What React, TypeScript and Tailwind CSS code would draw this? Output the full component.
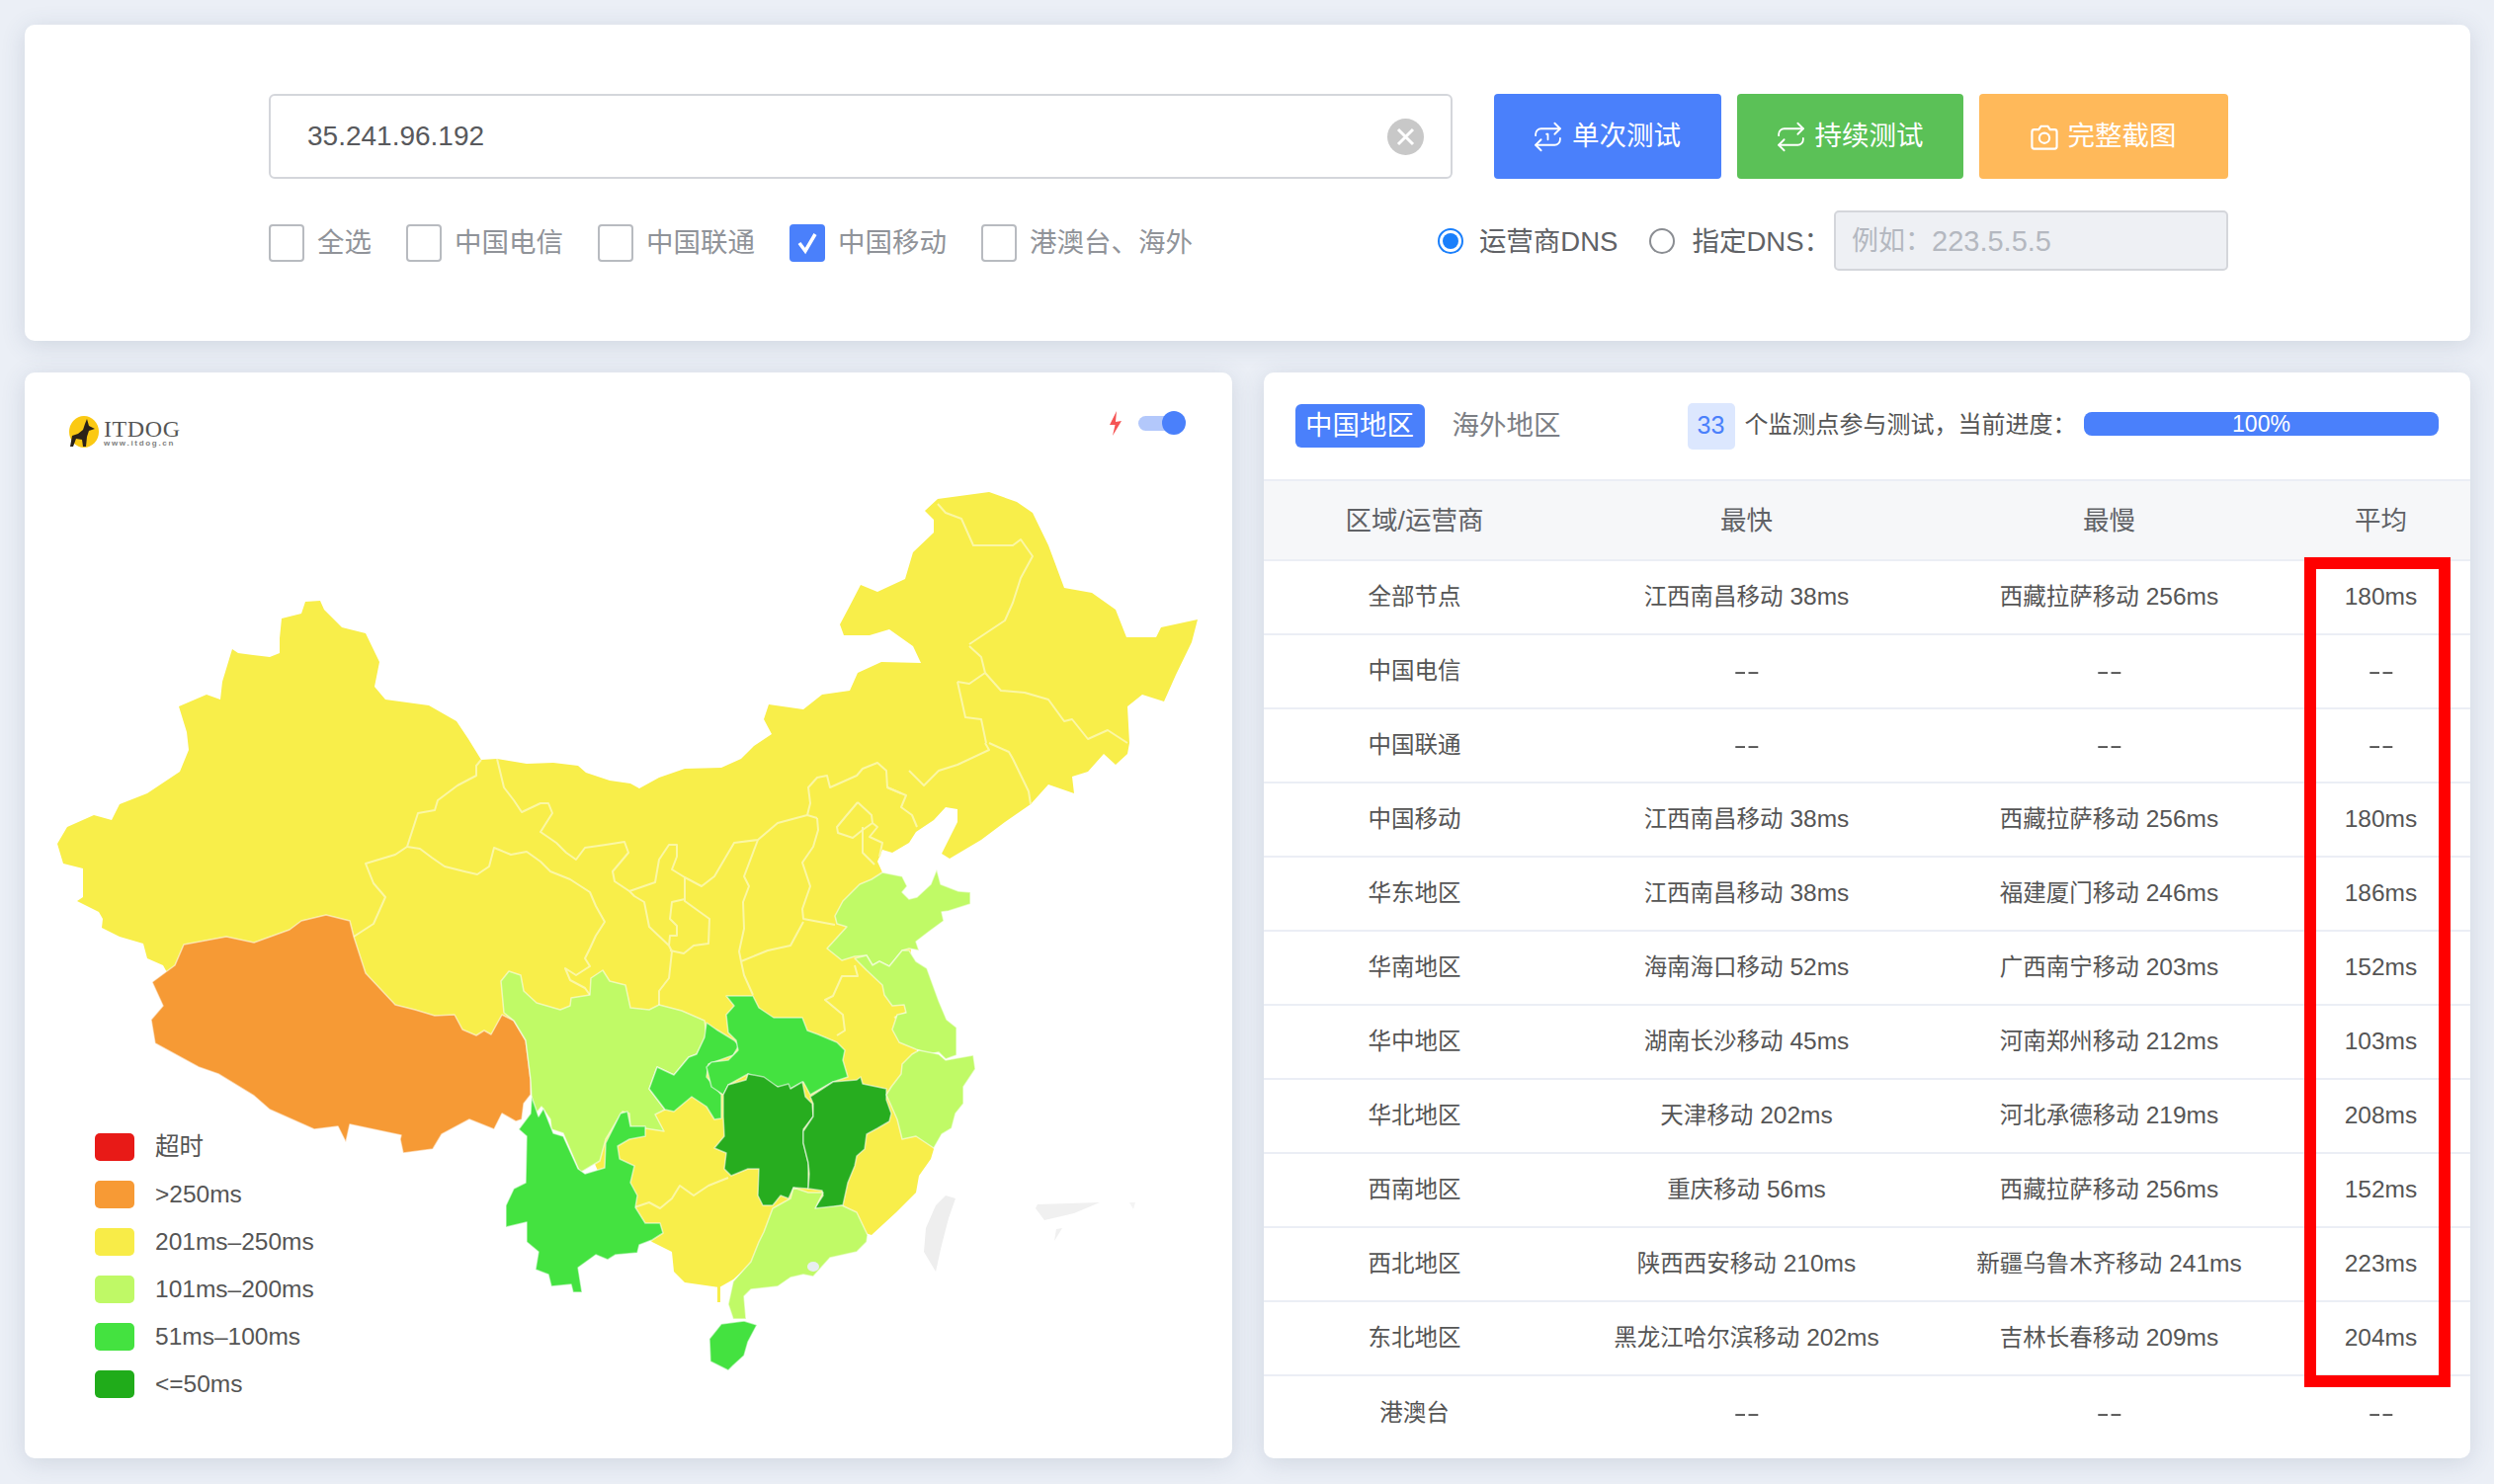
import React from "react";
import { Repeat, Repeat1 } from "lucide-react";

const FONT = "font-['Liberation_Sans','Noto_Sans_CJK_SC',sans-serif]";

const yellowMass =
  "309,609 324,608 328,617 346,635 370,641 384,670 379,695 390,708 434,714 462,730 474,748 487,769 503,768 533,773 560,772 585,775 593,782 617,790 638,793 647,798 667,787 693,778 730,777 750,768 763,755 781,743 773,728 778,713 813,718 832,703 860,699 868,681 892,670 932,671 924,654 900,637 880,643 854,643 850,632 858,617 871,592 888,599 916,586 924,559 945,539 945,526 936,517 949,505 1001,498 1029,508 1045,519 1061,552 1077,595 1105,600 1129,617 1140,645 1170,645 1175,635 1212,627 1206,650 1190,683 1178,710 1156,703 1141,715 1143,752 1141,763 1129,774 1117,763 1101,781 1085,786 1087,803 1061,794 1043,814 1017,832 993,850 961,869 953,864 969,832 969,819 957,817 945,830 927,842 920,853 903,863 893,860 888,872 893,883 920,940 925,1000 930,1100 945,1163 942,1173 930,1190 927,1207 907,1227 882,1250 850,1240 770,1270 742,1295 728,1303 693,1298 682,1287 680,1267 660,1257 620,1220 590,1150 560,1080 400,1080 200,1040 165,977 149,970 145,955 121,948 103,939 104,930 100,923 78,912 84,908 84,879 64,874 58,854 68,837 95,825 113,830 121,814 149,803 182,781 191,759 189,741 181,715 209,703 223,708 225,690 235,657 241,661 273,665 283,661 283,646 285,626 305,621";

const tibet =
  "186,956 229,948 257,954 293,941 305,932 330,926 354,932 358,948 370,985 400,1017 420,1022 440,1028 460,1027 468,1042 482,1048 490,1043 497,1047 508,1027 520,1033 532,1053 537,1093 537,1108 530,1117 528,1133 522,1135 508,1127 500,1143 475,1133 447,1148 438,1163 408,1167 405,1153 406,1149 354,1138 350,1156 342,1140 318,1143 273,1123 257,1109 221,1087 201,1080 157,1056 153,1032 165,1018 154,994 177,977";

const sichuan =
  "507,993 515,983 527,987 530,1003 543,1015 567,1022 577,1018 578,1010 597,1007 598,990 610,982 617,993 633,997 638,1020 657,1022 667,1017 690,1023 713,1033 715,1047 705,1067 697,1070 682,1088 665,1080 657,1102 673,1123 663,1128 672,1145 653,1142 638,1142 637,1127 630,1125 613,1153 607,1175 587,1187 570,1147 558,1143 557,1133 548,1120 540,1130 538,1113 537,1093 532,1053 520,1033 510,1025";

const chongqing =
  "715,1035 725,1042 743,1053 748,1058 742,1068 717,1077 715,1090 730,1108 730,1132 723,1133 715,1120 700,1110 682,1125 673,1123 657,1102 665,1080 682,1088 697,1070 705,1067 713,1050";

const hubei =
  "735,1008 762,1008 768,1020 783,1030 812,1030 817,1043 828,1047 847,1055 855,1063 853,1073 858,1090 843,1095 820,1108 813,1095 800,1102 787,1100 757,1087 737,1098 732,1108 720,1100 715,1080 720,1075 737,1073 747,1063 745,1053 737,1045 735,1027 743,1018";

const hunan =
  "732,1108 737,1098 755,1093 757,1087 773,1090 787,1100 798,1097 800,1102 812,1095 815,1110 822,1117 823,1130 813,1143 813,1157 818,1177 818,1203 803,1202 798,1213 790,1210 782,1220 772,1220 767,1210 768,1183 757,1183 740,1190 733,1183 735,1167 723,1162 733,1150 732,1130";

const jiangxi =
  "820,1110 843,1095 867,1093 871,1090 873,1097 897,1102 897,1113 902,1127 900,1135 888,1142 877,1148 875,1163 867,1170 865,1180 858,1197 853,1220 827,1225 825,1222 833,1210 832,1205 818,1203 819,1188 818,1177 813,1157 813,1145 823,1130 823,1117";

const yunnan =
  "538,1110 537,1127 525,1143 533,1150 532,1197 520,1203 512,1220 512,1242 533,1237 533,1257 545,1267 542,1285 555,1290 558,1302 578,1300 580,1308 589,1308 585,1283 603,1270 615,1275 623,1270 645,1268 647,1260 660,1255 671,1248 668,1238 653,1238 643,1222 645,1210 638,1197 642,1180 627,1173 625,1160 637,1153 653,1150 653,1140 638,1140 635,1125 628,1127 613,1157 612,1182 592,1188 585,1183 570,1150 560,1147 550,1122 545,1130";

const guangdong =
  "782,1223 800,1213 803,1202 818,1207 833,1207 825,1223 852,1220 867,1227 878,1250 877,1257 867,1267 840,1273 823,1292 813,1290 800,1293 787,1302 760,1305 753,1312 755,1335 742,1335 737,1320 742,1297 760,1277 768,1257 773,1247";

const hainan = "730,1340 753,1337 766,1341 757,1358 753,1372 742,1382 737,1387 719,1378 718,1355";

const shandong =
  "893,883 913,887 918,897 913,903 920,910 928,908 942,895 948,880 952,895 970,902 982,903 982,915 960,922 953,923 955,932 940,943 927,953 930,962 920,960 913,962 900,978 890,973 883,977 877,967 865,968 852,972 837,960 857,938 847,935 845,927 853,912 870,895 882,890";

const jiangsu =
  "920,962 927,973 938,980 950,1013 958,1032 968,1040 968,1068 957,1072 950,1065 940,1067 927,1062 910,1055 903,1042 908,1027 917,1025 915,1017 903,1018 895,1007 893,997 877,982 865,970 877,967 883,977 890,973 900,978 913,962";

const zhejiang =
  "930,1063 950,1067 957,1073 985,1068 987,1082 975,1100 975,1117 967,1127 963,1142 953,1148 945,1162 927,1150 913,1153 908,1133 897,1108 902,1100 912,1087 913,1077 923,1067";

const lines = [
  "487,769 482,775 482,785 463,795 443,810 440,820 423,823 412,857 400,865 370,874 378,894 390,908 378,935 358,948",
  "412,857 425,859 437,868 450,877 470,882 483,885 495,877 500,858 517,865 533,862 547,872 557,882 577,890 597,903 603,917 612,933 603,947 597,960 592,970 597,978 583,987 572,980 577,992 592,1000 597,1007",
  "503,768 510,797 520,810 528,822 547,813 555,813 559,823 547,842 563,853 573,863 583,870 592,858 613,855 632,852 636,863 620,882 622,892 637,902 663,893 667,870 677,855 685,855 685,867 680,880 693,888 710,897 723,887 743,853 767,850 787,833 817,825 827,828",
  "637,902 642,907 652,913 657,938 677,957 680,963 677,990 667,1003 667,1018",
  "693,888 693,912 718,930 717,955 702,957 692,965 678,962",
  "693,910 680,913 678,930 685,937 685,947 678,947 677,957",
  "767,850 753,887 758,897 752,913 753,940 748,963 750,973 753,987 762,1007",
  "750,973 777,962 800,957 813,933",
  "827,828 828,840 823,857 812,873 820,897 812,920 813,930 845,936",
  "817,825 820,813 818,797 827,787 837,785 840,797 867,785 873,778 888,772 897,780 898,797 917,805 912,817 923,825 928,837",
  "868,812 882,825 883,833 873,840 863,848 848,843 847,837 857,825 868,812",
  "873,837 873,863 885,875",
  "883,833 888,837 880,847 893,853 890,867",
  "920,780 935,795 950,780 969,774 1001,759 997,752",
  "898,797 912,803",
  "1001,752 1021,761 1025,768 1041,801 1043,814",
  "969,690 977,726 993,728 998,752",
  "997,681 1013,699 1037,701 1061,708 1077,730 1085,728 1101,748 1121,739 1141,752",
  "969,690 981,692 997,681 993,665 981,654",
  "949,510 957,519 973,525 985,552 1025,552 1033,546 1045,563 1033,585 1025,610 1017,628 981,652",
  "865,977 868,988 852,988 843,1008 835,1012 853,1027 855,1043 847,1048",
  "642,1222 657,1217 668,1223 680,1213 688,1200 702,1210 717,1200 737,1192",
  "950,1066 957,1044 968,1047",
  "917,1025 905,1030",
];

const legend = [
  { label: "超时", color: "bg-[#e81a17]" },
  { label: ">250ms", color: "bg-[#f79a35]" },
  { label: "201ms–250ms", color: "bg-[#f8ec48]" },
  { label: "101ms–200ms", color: "bg-[#bff966]" },
  { label: "51ms–100ms", color: "bg-[#44e240]" },
  { label: "<=50ms", color: "bg-[#20ac1a]" },
];

const rows = [
  ["全部节点", "江西南昌移动 38ms", "西藏拉萨移动 256ms", "180ms"],
  ["中国电信", "--", "--", "--"],
  ["中国联通", "--", "--", "--"],
  ["中国移动", "江西南昌移动 38ms", "西藏拉萨移动 256ms", "180ms"],
  ["华东地区", "江西南昌移动 38ms", "福建厦门移动 246ms", "186ms"],
  ["华南地区", "海南海口移动 52ms", "广西南宁移动 203ms", "152ms"],
  ["华中地区", "湖南长沙移动 45ms", "河南郑州移动 212ms", "103ms"],
  ["华北地区", "天津移动 202ms", "河北承德移动 219ms", "208ms"],
  ["西南地区", "重庆移动 56ms", "西藏拉萨移动 256ms", "152ms"],
  ["西北地区", "陕西西安移动 210ms", "新疆乌鲁木齐移动 241ms", "223ms"],
  ["东北地区", "黑龙江哈尔滨移动 202ms", "吉林长春移动 209ms", "204ms"],
  ["港澳台", "--", "--", "--"],
];

function Check({ label, checked }: { label: string; checked?: boolean }) {
  return (
    <label className="flex items-center gap-[13px] mr-[35px] mt-[4px] last:mr-0">
      <span
        className={
          checked
            ? "flex w-[36px] h-[38px] items-center justify-center rounded-[4px] bg-[#4a80fb]"
            : "block w-[36px] h-[38px] rounded-[4px] border-2 border-[#b8bbc0] bg-white"
        }
      >
        {checked && (
          <svg width="26" height="26" viewBox="0 0 26 26" fill="none">
            <path d="M5 13l6 8L21 4" stroke="#fff" strokeWidth="3.5" />
          </svg>
        )}
      </span>
      <span className="text-[27.5px] leading-none text-[#909399]">{label}</span>
    </label>
  );
}

function Cell({ v }: { v: string }) {
  if (v === "--") {
    return (
      <td className="text-center">
        <span className="inline-block scale-x-[1.7]">--</span>
      </td>
    );
  }
  const m = v.match(/^(.*?)\s?(\d+ms)$/);
  if (m) {
    return (
      <td className="text-center">
        {m[1]}
        {m[1] ? <span className="text-[24.5px]"> </span> : null}
        <span className="text-[24.5px]">{m[2]}</span>
      </td>
    );
  }
  return <td className="text-center">{v}</td>;
}

export default function App() {
  return (
    <div className={`${FONT} min-h-screen bg-[#ebeff6] pl-[25px] pr-[24px] pt-[25px] pb-[25px] flex flex-col gap-[32px] text-[#606266]`}>
      {/* top card */}
      <section className="h-[320px] rounded-[10px] bg-white shadow-[0_4px_24px_rgba(60,80,110,0.16)] pl-[247px] pt-[70px] flex flex-col gap-[32px]">
        <div className="flex items-stretch h-[86px]">
          <div className="w-[1198px] rounded-[6px] border-2 border-[#d4d6db] flex items-center justify-between pl-[37px] pr-[27px]">
            <span className="text-[28px] text-[#58595c]">35.241.96.192</span>
            <span className="w-[37px] h-[37px] rounded-full bg-[#c8c8c8] flex items-center justify-center">
              <svg width="21" height="21" viewBox="0 0 21 21" fill="none">
                <path d="M3 3l15 15M18 3L3 18" stroke="#fff" strokeWidth="3" />
              </svg>
            </span>
          </div>
          <button className="ml-[42px] w-[230px] pr-[3px] rounded-[4px] bg-[#4a80fb] text-white text-[27.5px] flex items-center justify-center gap-[8px]">
            <Repeat1 size={33} strokeWidth={1.3} />
            单次测试
          </button>
          <button className="ml-[16px] w-[229px] pr-[3px] rounded-[4px] bg-[#5bc157] text-white text-[27.5px] flex items-center justify-center gap-[8px]">
            <Repeat size={33} strokeWidth={1.3} />
            持续测试
          </button>
          <button className="ml-[16px] w-[252px] pr-[3px] rounded-[4px] bg-[#ffb95a] text-white text-[27.5px] flex items-center justify-center gap-[8px]">
            <svg width="32" height="32" viewBox="0 0 28 28" fill="none" stroke="currentColor" strokeWidth="1.9">
              <path d="M5 8h4l2-3h6l2 3h4a2 2 0 0 1 2 2v13a2 2 0 0 1-2 2H5a2 2 0 0 1-2-2V10a2 2 0 0 1 2-2z" />
              <circle cx="14" cy="15.5" r="4.5" />
            </svg>
            完整截图
          </button>
        </div>
        <div className="flex items-center w-[1983px] h-[61px]">
          <Check label="全选" />
          <Check label="中国电信" />
          <Check label="中国联通" />
          <Check label="中国移动" checked />
          <Check label="港澳台、海外" />
          <span className="ml-auto w-[26px] h-[26px] rounded-full border-2 border-[#1a7ffb] flex items-center justify-center">
            <span className="block w-[16px] h-[16px] rounded-full bg-[#1a7ffb]" />
          </span>
          <span className="ml-[16px] pt-[2px] text-[27.5px] leading-none">运营商DNS</span>
          <span className="ml-[32px] w-[26px] h-[26px] rounded-full border-2 border-[#8a8d92]" />
          <span className="ml-[17px] pt-[2px] text-[27.5px] leading-none">指定DNS：</span>
          <div className="ml-[3px] w-[399px] h-[61px] rounded-[5px] border-2 border-[#d4d6db] bg-[#eef0f4] flex items-center pl-[16px] pt-[2px] text-[27px] text-[#b4b8c0]">
            例如：<span className="text-[29px]">223.5.5.5</span>
          </div>
        </div>
      </section>

      {/* lower cards */}
      <div className="flex gap-[32px] h-[1099px]">
        <section className="relative w-[1222px] rounded-[10px] bg-white shadow-[0_4px_24px_rgba(60,80,110,0.16)] overflow-hidden">
          <svg className="block blur-[0.6px]" width="1222" height="1099" viewBox="25 377 1222 1099">
            <polygon points={yellowMass} fill="#f8ee4a" />
            <polygon points="726,1300 729,1300 729,1318 726,1318" fill="#f8ee4a" />
            <g stroke="#fbf7a5" strokeWidth="2" fill="none" strokeLinejoin="round">
              {lines.map((p, i) => (
                <polyline key={i} points={p} />
              ))}
            </g>
            <g stroke="#ffffff" strokeOpacity="0.55" strokeWidth="1.5" strokeLinejoin="round">
              <polygon points={tibet} fill="#f69a35" />
              <polygon points={sichuan} fill="#c0fa66" />
              <polygon points={yunnan} fill="#44e240" />
              <polygon points={chongqing} fill="#44e240" />
              <polygon points={hubei} fill="#44e240" />
              <polygon points={hunan} fill="#27ad1f" />
              <polygon points={jiangxi} fill="#27ad1f" />
              <polygon points={guangdong} fill="#c0fa66" />
              <polygon points={hainan} fill="#44e240" />
              <polygon points={shandong} fill="#c0fa66" />
              <polygon points={jiangsu} fill="#c0fa66" />
              <polygon points={zhejiang} fill="#c0fa66" />
            </g>
            <ellipse cx="823" cy="1282" rx="6" ry="5" fill="#e8eef0" />
            <polygon points="957,1210 967,1213 960,1233 953,1260 947,1287 935,1267 937,1243 947,1220" fill="#eeeeee" />
            <polygon points="1050,1219 1113,1217 1087,1228 1057,1235 1048,1223" fill="#f0f0f0" />
            <polygon points="1075,1243 1067,1256 1069,1244" fill="#f0f0f0" />
            <polygon points="1143,1217 1149,1217 1147,1224" fill="#f4f4f4" />
          </svg>

          {/* logo */}
          <div className="absolute left-[30px] top-[28px] flex items-start">
            <svg width="50" height="60" viewBox="0 0 50 60">
              <ellipse cx="30" cy="32" rx="15" ry="16" fill="#fbc913" />
              <polygon
                points="33,19 35,26 41,29 35,31 33,37 32,47 29,47 28,40 22,39 19,47 16,47 18,36 24,34 29,30 31,24"
                fill="#2a2118"
              />
            </svg>
            <div className="pt-[19px] flex flex-col">
              <span className="font-['Liberation_Serif',serif] text-[24px] leading-[21px] tracking-[0.6px] text-[#555]">ITDOG</span>
              <span className="text-[8px] leading-[8px] font-bold tracking-[1.7px] text-[#808080]">www.itdog.cn</span>
            </div>
          </div>

          {/* toggle */}
          <div className="absolute left-[1098px] top-[39px] flex items-center">
            <svg width="12" height="25" viewBox="0 0 12 25">
              <polygon points="7,0 0,14 5.5,14 3,25 12,10 6,11" fill="#f55555" />
            </svg>
            <span className="relative ml-[17px] block w-[42px] h-[15px] rounded-full bg-[#b3c8fb]">
              <span className="absolute right-[-6px] top-[-5px] block w-[24px] h-[24px] rounded-full bg-[#4a80fb]" />
            </span>
          </div>

          {/* legend */}
          <ul className="absolute left-[71px] top-[770px] flex flex-col gap-[20px]">
            {legend.map((l) => (
              <li key={l.label} className="flex items-center gap-[21px] h-[28px]">
                <span className={`block w-[40px] h-[28px] rounded-[5px] ${l.color}`} />
                <span className="text-[24.5px] leading-none text-[#555]">{l.label}</span>
              </li>
            ))}
          </ul>
        </section>

        <section className="relative w-[1222px] rounded-[10px] bg-white shadow-[0_4px_24px_rgba(60,80,110,0.16)] overflow-hidden">
          <div className="h-[110px] border-b-2 border-[#ebeef5] flex items-center pl-[32px] pr-[32px]">
            <span className="flex items-center justify-center w-[131px] h-[44px] rounded-[6px] bg-[#4a80fb] text-white text-[27.5px]">中国地区</span>
            <span className="ml-[28px] text-[27.5px] text-[#7b7e84]">海外地区</span>
            <span className="ml-[128px] flex items-center justify-center w-[48px] h-[47px] rounded-[5px] bg-[#dce7fe] text-[#4a80fb] text-[25px]">33</span>
            <span className="ml-[10px] -mt-[3px] text-[24px] text-[#555]">个监测点参与测试，当前进度：</span>
            <div className="ml-auto -mt-[4px] w-[359px] h-[24px] rounded-[8px] bg-[#4a80fb] flex items-center justify-center text-white text-[23px] leading-none">100%</div>
          </div>
          <table className="w-full table-fixed border-collapse text-[23.5px] text-[#555]">
            <colgroup>
              <col className="w-[306px]" />
              <col className="w-[366px]" />
              <col className="w-[368px]" />
              <col className="w-[182px]" />
            </colgroup>
            <thead>
              <tr className="h-[80px] bg-[#f6f7f9] border-b-2 border-[#ebeef5] text-[26.5px] text-[#606266]">
                <th className="font-normal pt-[2px]">区域/运营商</th>
                <th className="font-normal pt-[2px]">最快</th>
                <th className="font-normal pt-[2px]">最慢</th>
                <th className="font-normal pt-[2px]">平均</th>
              </tr>
            </thead>
            <tbody>
              {rows.map((r, i) => (
                <tr key={i} className={i === rows.length - 1 ? "h-[77px]" : "h-[75px] border-b-2 border-[#ebeef5]"}>
                  {r.map((v, j) => (
                    <Cell key={j} v={v} />
                  ))}
                </tr>
              ))}
            </tbody>
          </table>
          <div className="absolute left-[1053px] top-[187px] w-[148px] h-[840px] border-[12px] border-[#ff0000] pointer-events-none" />
        </section>
      </div>
    </div>
  );
}
